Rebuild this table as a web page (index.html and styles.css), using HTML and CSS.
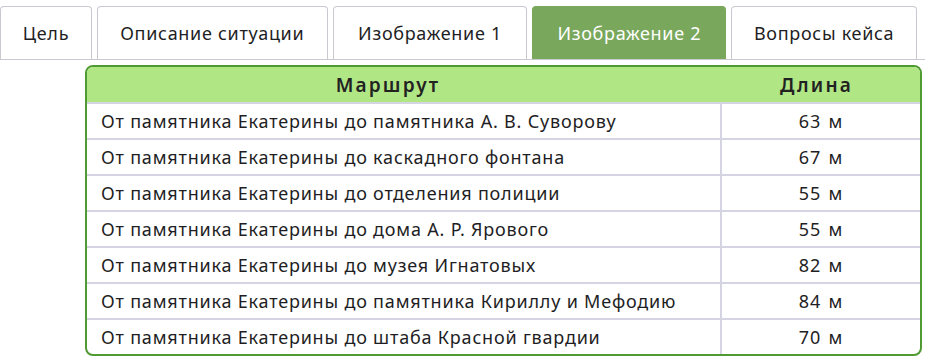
FILE: index.html
```html
<!DOCTYPE html>
<html lang="ru">
<head>
<meta charset="utf-8">
<link rel="stylesheet" href="styles.css">
</head>
<body>
<nav class="tabs">
  <div class="tab">Цель</div>
  <div class="tab">Описание ситуации</div>
  <div class="tab">Изображение 1</div>
  <div class="tab active">Изображение 2</div>
  <div class="tab">Вопросы кейса</div>
</nav>
<div class="panel">
  <table class="routes">
    <colgroup><col class="col-route"><col class="col-len"></colgroup>
    <thead>
      <tr><th class="c-route">Маршрут</th><th class="c-len">Длина</th></tr>
    </thead>
    <tbody>
      <tr><td class="c-route">От памятника Екатерины до памятника А. В. Суворову</td><td class="c-len">63 м</td></tr>
      <tr><td class="c-route">От памятника Екатерины до каскадного фонтана</td><td class="c-len">67 м</td></tr>
      <tr><td class="c-route">От памятника Екатерины до отделения полиции</td><td class="c-len">55 м</td></tr>
      <tr><td class="c-route">От памятника Екатерины до дома А. Р. Ярового</td><td class="c-len">55 м</td></tr>
      <tr><td class="c-route">От памятника Екатерины до музея Игнатовых</td><td class="c-len">82 м</td></tr>
      <tr><td class="c-route">От памятника Екатерины до памятника Кириллу и Мефодию</td><td class="c-len">84 м</td></tr>
      <tr><td class="c-route">От памятника Екатерины до штаба Красной гвардии</td><td class="c-len">70 м</td></tr>
    </tbody>
  </table>
</div>
</body>
</html>
```
FILE: styles.css
```css
html, body {
  margin: 0;
  padding: 0;
  background: #ffffff;
}
body {
  font-family: "Noto Sans", "DejaVu Sans", sans-serif;
  color: #1e1e24;
}
.tabs {
  display: flex;
  gap: 5px;
  padding: 6px 8px 0 0;
  border-bottom: 1px solid #c9c9d1;
  height: 53px;
  box-sizing: content-box;
}
.tab {
  box-sizing: border-box;
  height: 53px;
  padding: 0;
  display: flex;
  align-items: center;
  justify-content: center;
  border: 1px solid #c9c9d1;
  border-bottom: none;
  border-radius: 4px 4px 0 0;
  font-size: 18px;
  letter-spacing: 0.7px;
  color: #1e1e24;
  background: #fff;
}
.tab:first-child { width: 92px; }
.tab:nth-child(2) { width: 231px; }
.tab:nth-child(3) { width: 195px; }
.tab:nth-child(4) { width: 194px; }
.tab:nth-child(5) { width: 186px; }
.tab.active {
  background: #79a85c;
  border-color: #79a85c;
  color: #ffffff;
}
.panel {
  margin: 5px 3px 0 85px;
  border: 2px solid #4f9a33;
  border-radius: 8px;
  overflow: hidden;
  width: 833px;
}
.routes {
  width: 100%;
  table-layout: fixed;
  border-collapse: collapse;
  font-size: 18px;
  letter-spacing: 0.8px;
}
.col-route { width: 634px; }
.routes th {
  background: #b1e684;
  height: 35px;
  padding: 0;
  font-size: 19px;
  font-weight: 600;
  letter-spacing: 2.2px;
  text-align: center;
  color: #222;
}
.routes th.c-route { padding-right: 32px; }
.routes th.c-len { padding-right: 8px; }
.routes td {
  height: 34px;
  padding: 0;
  border-top: 2px solid #d4d4e2;
  white-space: nowrap;
}
.routes td.c-route {
  padding-left: 14px;
  text-align: left;
}
.routes .c-len {
  text-align: center;
  word-spacing: 2px;
  border-left: 2px solid #d4d4e2;
}
.routes th.c-len { border-left: none; }
```
